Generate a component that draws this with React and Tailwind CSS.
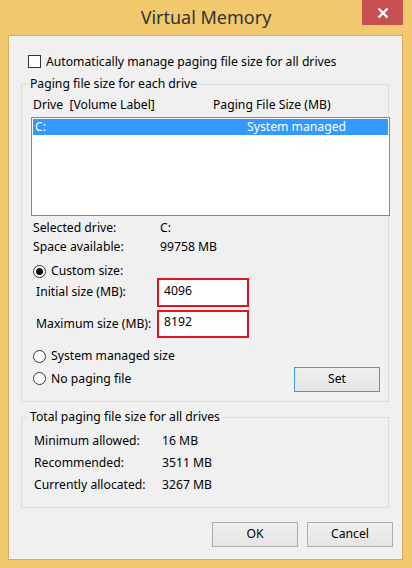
export default function App() {
  const font = { fontFamily: '"Noto Sans", "Open Sans", sans-serif' };

  const Radio = ({ checked }) => (
    <span className="flex h-[13px] w-[13px] shrink-0 items-center justify-center rounded-full border border-[#333] bg-white">
      {checked && <span className="h-[7px] w-[7px] rounded-full bg-[#111]" />}
    </span>
  );

  const Button = ({ children, focused }) => (
    <button
      className={`flex h-[25px] w-[86px] items-center justify-center border bg-gradient-to-b from-[#F0F0F0] to-[#E5E5E5] text-[12.2px] text-black ${
        focused ? "border-[#3C9CF0]" : "border-[#ACACAC]"
      }`}
    >
      {children}
    </button>
  );

  return (
    <div
      className="relative flex h-[568px] w-[412px] flex-col bg-[#F2C86C] text-black"
      style={font}
    >
      {/* title bar */}
      <div className="flex h-[35px] items-center justify-center pb-[1px]">
        <span className="text-[18px] leading-none text-[#333]">Virtual Memory</span>
      </div>
      <button className="absolute right-[9px] top-0 flex h-[25px] w-[41px] items-center justify-center bg-[#C75050]">
        <svg width="12" height="12" viewBox="0 0 12 12">
          <path d="M1.5 1.5 L10.5 10.5 M10.5 1.5 L1.5 10.5" stroke="#fff" strokeWidth="2.4" />
        </svg>
      </button>

      {/* client area */}
      <div className="ml-[8px] flex h-[525px] w-[395px] flex-col border border-[#D6AE5C] bg-[#F0F0F0] pl-[12px] text-[12.2px]">
        <div className="ml-[7px] mt-[19px] flex h-[13px] items-center gap-[5px]">
          <span className="h-[13px] w-[13px] border border-[#333] bg-white" />
          <span className="mt-[1px] leading-none">Automatically manage paging file size for all drives</span>
        </div>

        {/* group 1 */}
        <div className="relative mt-[16px] flex h-[318px] w-[368px] flex-col border border-[#DCDCDC]">
          <span className="absolute left-[6px] top-[-9px] bg-[#F0F0F0] px-[2px] leading-[16px]">
            Paging file size for each drive
          </span>
          <div className="ml-[11px] mt-[12px] flex h-[16px] items-center">
            <span className="w-[180px]">Drive&nbsp;&nbsp;[Volume Label]</span>
            <span>Paging File Size (MB)</span>
          </div>
          <div className="ml-[9px] mt-[4px] h-[99px] w-[359px] border border-[#828790] bg-white p-[1px]">
            <div className="flex h-[16px] items-center bg-[#3399FF] text-white">
              <span className="ml-[2px] w-[212px]">C:</span>
              <span>System managed</span>
            </div>
          </div>
          <div className="ml-[11px] mt-[3px] flex h-[19px] items-center">
            <span className="w-[127px]">Selected drive:</span>
            <span>C:</span>
          </div>
          <div className="ml-[11px] flex h-[19px] items-center">
            <span className="w-[127px]">Space available:</span>
            <span>99758 MB</span>
          </div>
          <div className="ml-[11px] mt-[8px] flex h-[13px] items-center gap-[5px]">
            <Radio checked />
            <span>Custom size:</span>
          </div>
          <div className="ml-[14px] flex h-[29px] items-center">
            <span className="w-[121px]">Initial size (MB):</span>
            <div className="h-[29px] w-[92px] border-2 border-[#E0141E] bg-white pl-[5px] pt-[3px] leading-[16px]">
              4096
            </div>
          </div>
          <div className="ml-[14px] mt-[3px] flex h-[28px] items-center">
            <span className="w-[121px]">Maximum size (MB):</span>
            <div className="h-[28px] w-[92px] border-2 border-[#E0141E] bg-white pl-[5px] pt-[2px] leading-[16px]">
              8192
            </div>
          </div>
          <div className="ml-[11px] mt-[10px] flex h-[16px] items-center gap-[5px]">
            <Radio />
            <span>System managed size</span>
          </div>
          <div className="ml-[11px] mt-[2px] flex h-[26px] w-[347px] items-center justify-between">
            <div className="flex items-center gap-[5px]">
              <Radio />
              <span>No paging file</span>
            </div>
            <Button focused>Set</Button>
          </div>
        </div>

        {/* group 2 */}
        <div className="relative mt-[15px] flex h-[91px] w-[368px] flex-col border border-[#DCDCDC]">
          <span className="absolute left-[6px] top-[-9px] bg-[#F0F0F0] px-[2px] leading-[16px]">
            Total paging file size for all drives
          </span>
          <div className="ml-[12px] mt-[12px] flex h-[22px] items-center">
            <span className="w-[128px]">Minimum allowed:</span>
            <span>16 MB</span>
          </div>
          <div className="ml-[12px] flex h-[22px] items-center">
            <span className="w-[128px]">Recommended:</span>
            <span>3511 MB</span>
          </div>
          <div className="ml-[12px] flex h-[22px] items-center">
            <span className="w-[128px]">Currently allocated:</span>
            <span>3267 MB</span>
          </div>
        </div>

        <div className="mr-[9px] mt-[14px] flex justify-end gap-[9px]">
          <Button>OK</Button>
          <Button>Cancel</Button>
        </div>
      </div>
    </div>
  );
}
